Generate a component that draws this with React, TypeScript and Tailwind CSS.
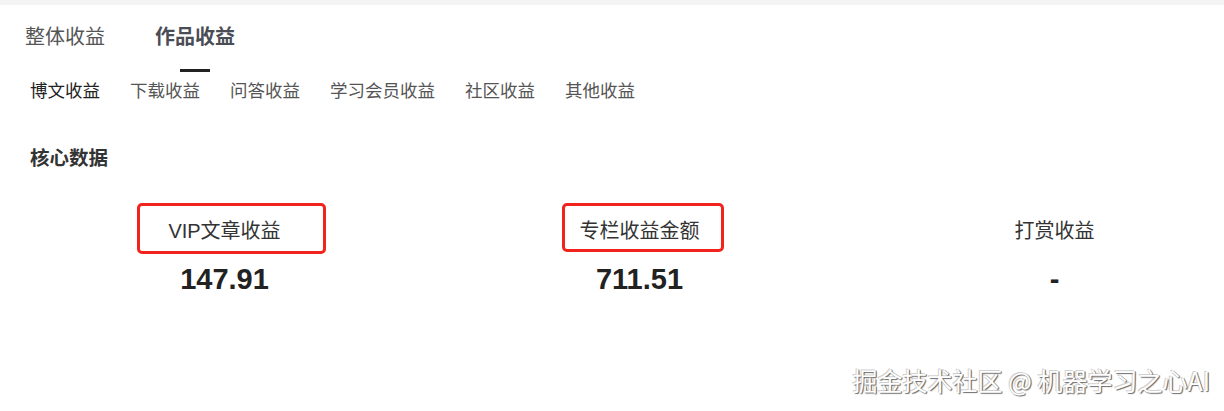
import React from "react";

const FONT = '"Liberation Sans", "Noto Sans CJK SC", sans-serif';

function Stat({ label, value, box }: { label: string; value: string; box?: string }) {
  return (
    <div className="flex flex-col items-center">
      <span className="relative text-[20px] leading-[20px] text-[#333]">
        {label}
        {box && <span className={`absolute border-[3px] border-[#f2231d] rounded-[5px] ${box}`} />}
      </span>
      <span className="mt-[23px] text-[29px] leading-[30px] font-bold text-[#222]">{value}</span>
    </div>
  );
}

export default function App() {
  return (
    <div className="relative w-[1224px] h-[411px] bg-white overflow-hidden" style={{ fontFamily: FONT }}>
      <div className="h-[5px] bg-[#f4f4f4]" />
      <div className="mt-[22px] flex pl-[25px] gap-[50px]">
        <span className="text-[20px] leading-[20px] text-[#555]">整体收益</span>
        <div className="flex flex-col items-center">
          <span className="text-[20px] leading-[20px] font-bold text-[#4a4d55]">作品收益</span>
          <div className="mt-[22px] w-[30px] h-[3px] bg-[#222]" />
        </div>
      </div>
      <div className="mt-[10px] flex pl-[30px] gap-[30px] text-[17.5px] leading-[18px] text-[#555]">
        <span className="text-[#222]">博文收益</span>
        <span>下载收益</span>
        <span>问答收益</span>
        <span>学习会员收益</span>
        <span>社区收益</span>
        <span>其他收益</span>
      </div>
      <div className="mt-[48px] pl-[30px] text-[19.5px] leading-[20px] font-bold text-[#333]">核心数据</div>
      <div className="mt-[53px] ml-[17px] grid grid-cols-[415px_415px_415px]">
        <Stat label="VIP文章收益" value="147.91" box="-left-[31px] -right-[45px] -top-[18px] -bottom-[13px]" />
        <Stat label="专栏收益金额" value="711.51" box="-left-[18px] -right-[24px] -top-[18px] -bottom-[11px]" />
        <Stat label="打赏收益" value="-" />
      </div>
      <div
        className="absolute right-[14px] bottom-[18px] text-[25px] leading-[25px] text-white whitespace-nowrap [text-shadow:1px_1px_1px_#6b6b6b,-1px_-1px_0_#d0d0d0,1px_0_0_#a0a0a0]"
        style={{ fontFamily: '"Noto Sans CJK SC", sans-serif' }}
      >
        掘金技术社区 @ 机器学习之心AI
      </div>
    </div>
  );
}
